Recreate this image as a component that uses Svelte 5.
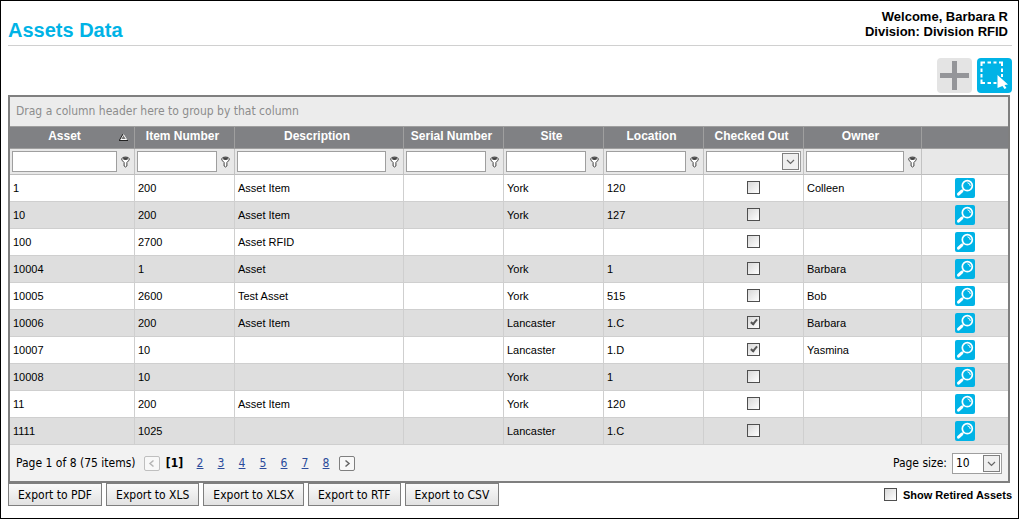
<script>
  const columns = [
    { name: "Asset", width: 125, sorted: true },
    { name: "Item Number", width: 100 },
    { name: "Description", width: 169 },
    { name: "Serial Number", width: 100 },
    { name: "Site", width: 100 },
    { name: "Location", width: 100 },
    { name: "Checked Out", width: 100, select: true },
    { name: "Owner", width: 118 }
  ];

  const assets = [
    { id: "1", item: "200", description: "Asset Item", site: "York", location: "120", out: false, owner: "Colleen" },
    { id: "10", item: "200", description: "Asset Item", site: "York", location: "127", out: false, owner: "" },
    { id: "100", item: "2700", description: "Asset RFID", site: "", location: "", out: false, owner: "" },
    { id: "10004", item: "1", description: "Asset", site: "York", location: "1", out: false, owner: "Barbara" },
    { id: "10005", item: "2600", description: "Test Asset", site: "York", location: "515", out: false, owner: "Bob" },
    { id: "10006", item: "200", description: "Asset Item", site: "Lancaster", location: "1.C", out: true, owner: "Barbara" },
    { id: "10007", item: "10", description: "", site: "Lancaster", location: "1.D", out: true, owner: "Yasmina" },
    { id: "10008", item: "10", description: "", site: "York", location: "1", out: false, owner: "" },
    { id: "11", item: "200", description: "Asset Item", site: "York", location: "120", out: false, owner: "" },
    { id: "1111", item: "1025", description: "", site: "Lancaster", location: "1.C", out: false, owner: "" }
  ];

  const pages = [2, 3, 4, 5, 6, 7, 8];
  const formats = ["PDF", "XLS", "XLSX", "RTF", "CSV"];

  let showRetired = false;
</script>

{#snippet dropArrow()}
  <svg class="dropArrow" viewBox="0 0 17 17" width="17" height="17">
    <rect x="0.5" y="0.5" width="16" height="16" fill="#efefef" stroke="#7f7f7f" />
    <path d="M5 7 L8.5 10.5 L12 7" fill="none" stroke="#666" stroke-width="1.2" />
  </svg>
{/snippet}

<div class="page">
  <header>
    <h1>Assets Data</h1>
    <div class="welcome">
      <div>Welcome, Barbara R</div>
      <div>Division: Division RFID</div>
    </div>
  </header>

  <div class="toolbar">
    <button class="tool add" aria-label="Add asset">
      <svg viewBox="0 0 35 35" width="35" height="35">
        <path d="M15 3h5v12h12v5H20v12h-5V20H3v-5h12z" fill="#949599" />
      </svg>
    </button>
    <button class="tool pick" aria-label="Select assets">
      <svg viewBox="0 0 35 35" width="35" height="35">
        <path d="M4.500 8V4.500H8M10.500 4.500h3.500M16.500 4.500h3M22 4.500h3V8M25 10.500v3.500M25 16v3M4.500 10.500v3.500M4.500 16v3.500M4.500 21.500V25H8M10.500 25h3.500M16.500 25h3" fill="none" stroke="#fff" stroke-width="2" />
        <path d="M20.500 17 L31 26.500 L27.500 27 L29.500 30 L27.500 31 L25.500 28 L20.500 30 Z" fill="#fff" />
      </svg>
    </button>
  </div>

  <div class="grid">
    <div class="groupPanel">Drag a column header here to group by that column</div>
    <table>
      <colgroup>
        {#each columns as column}
          <col style="width: {column.width}px" />
        {/each}
        <col class="viewCol" />
      </colgroup>
      <thead>
        <tr class="titles">
          {#each columns as column}
            <th scope="col">
              <div class="title">
                <span>{column.name}</span>
                {#if column.sorted}
                  <svg viewBox="0 0 9 8" width="9" height="8">
                    <path d="M4.500 1.500 L7.500 6.500 H1.500 Z" fill="#777" stroke="#fff" />
                    <path d="M0.500 7 L4 1" stroke="#222" />
                    <path d="M0 7.500 H9" stroke="#222" />
                  </svg>
                {/if}
              </div>
            </th>
          {/each}
          <td></td>
        </tr>
        <tr class="filters">
          {#each columns as column}
            <td>
              <div class="filter">
                {#if column.select}
                  <div class="dropDown">
                    <select aria-label="Filter {column.name}">
                      <option></option>
                      <option>Checked</option>
                      <option>Unchecked</option>
                    </select>
                    {@render dropArrow()}
                  </div>
                {:else}
                  <input type="text" aria-label="Filter {column.name}" />
                  <button class="funnel" aria-label="{column.name} filter options">
                    <svg viewBox="0 0 9 12" width="9" height="12">
                      <path d="M0.600 3 Q1 1 4.500 1 Q8 1 8.400 3 Q8 4.800 5.900 6.500 V10 Q4.500 12 3.100 10 V6.500 Q1 4.800 0.600 3 Z" fill="#fff" stroke="#444" />
                      <ellipse cx="4.500" cy="2.700" rx="2.500" ry="1.400" fill="#444" />
                    </svg>
                  </button>
                {/if}
              </div>
            </td>
          {/each}
          <td></td>
        </tr>
      </thead>
      <tbody>
        {#each assets as asset}
          <tr>
            <td>{asset.id}</td>
            <td>{asset.item}</td>
            <td>{asset.description}</td>
            <td></td>
            <td>{asset.site}</td>
            <td>{asset.location}</td>
            <td class="center">
              <input type="checkbox" checked={asset.out} aria-label="Asset {asset.id} checked out" />
            </td>
            <td>{asset.owner}</td>
            <td class="center">
              <button class="view" aria-label="View asset {asset.id}">
                <svg viewBox="0 0 20 20" width="20" height="20">
                  <circle cx="12.300" cy="7.700" r="5" fill="none" stroke="#fff" stroke-width="1.700" />
                  <path d="M12.500 4.800 Q15.200 5.200 15.300 8" fill="none" stroke="#fff" />
                  <path d="M9 11 L7.500 12.500" stroke="#fff" stroke-width="1.500" />
                  <path d="M6.800 13.200 L3.500 16.200" stroke="#fff" stroke-width="3" stroke-linecap="round" />
                </svg>
              </button>
            </td>
          </tr>
        {/each}
      </tbody>
    </table>

    <div class="pager">
      <span>Page 1 of 8 (75 items)</span>
      <nav aria-label="Pages">
        <button class="step" disabled aria-label="Previous page">
          <svg viewBox="0 0 14 13" width="14" height="13">
            <path d="M8.500 3.500 L5 6.500 L8.500 9.500" fill="none" stroke="currentColor" stroke-width="1.500" />
          </svg>
        </button>
        <b>[1]</b>
        {#each pages as page}
          <a href="#page{page}">{page}</a>
        {/each}
        <button class="step next" aria-label="Next page">
          <svg viewBox="0 0 14 13" width="14" height="13">
            <path d="M5.500 3.500 L9 6.500 L5.500 9.500" fill="none" stroke="currentColor" stroke-width="1.500" />
          </svg>
        </button>
      </nav>
      <label class="pageSize" for="pageSize">Page size:</label>
      <div class="dropDown size">
        <select id="pageSize">
          <option>10</option>
          <option>20</option>
          <option>50</option>
        </select>
        {@render dropArrow()}
      </div>
    </div>
  </div>

  <footer>
    <div class="exports">
      {#each formats as format}
        <button class="export">Export to {format}</button>
      {/each}
    </div>
    <label class="retired">
      <input type="checkbox" bind:checked={showRetired} />
      Show Retired Assets
    </label>
  </footer>
</div>

<style>
  .page {
    box-sizing: border-box;
    border: 1px solid #000;
    padding: 8px 6px 12px 7px;
    background: #fff;
    color: #000;
    font-family: "Liberation Sans", Arial, sans-serif;
    font-size: 11px;
  }

  header {
    display: flex;
    justify-content: space-between;
    height: 36px;
    border-bottom: 1px solid #d0d0d0;
  }

  h1 {
    margin: 9px 0 0;
    font-size: 20px;
    line-height: 24px;
    color: #00b3e6;
  }

  .welcome {
    padding-right: 4px;
    font-size: 13px;
    font-weight: bold;
    line-height: 15px;
    text-align: right;
  }

  button {
    padding: 0;
    border: 0;
    background: none;
    font: inherit;
    color: inherit;
  }

  svg {
    display: block;
  }

  .toolbar {
    display: flex;
    justify-content: flex-end;
    gap: 5px;
    padding: 12px 0 2px;
  }

  .tool {
    width: 35px;
    height: 35px;
    border-radius: 4px;
  }

  .add {
    background: #e4e4e4;
  }

  .pick,
  .view {
    background: #00b3e6;
  }

  .grid {
    margin-right: 2px;
    border: 2px solid #7f7f7f;
  }

  .groupPanel {
    padding: 0 6px;
    background: #ececec;
    color: #8c8c8c;
    line-height: 29px;
  }

  .groupPanel,
  .pager,
  .export {
    font-family: "DejaVu Sans Condensed", Tahoma, sans-serif;
    font-size: 12px;
  }

  table {
    width: 100%;
    table-layout: fixed;
    border-collapse: separate;
    border-spacing: 0;
  }

  .viewCol {
    width: 86px;
  }

  th,
  td {
    box-sizing: border-box;
    border-right: 1px solid #cfcfcf;
    border-bottom: 1px solid #cfcfcf;
  }

  tr > :last-child {
    border-right: 0;
  }

  .titles > * {
    height: 23px;
    padding: 0;
    border-top: 1px solid #9f9f9f;
    border-color: #9f9f9f;
    background: #808184;
    color: #fff;
    font-size: 12px;
  }

  .title {
    display: flex;
    align-items: center;
    padding: 0 4px 2px 0;
    line-height: 17px;
  }

  .title span {
    flex: 1;
    white-space: nowrap;
  }

  .title svg {
    margin-right: 2px;
  }

  .filters td {
    height: 26px;
    padding: 2px;
    border-right-color: #c2c2c2;
    border-bottom-color: #bdbdbd;
    background: #e8e8e8;
  }

  .filter {
    display: flex;
    align-items: center;
  }

  .filter input,
  select {
    box-sizing: border-box;
    min-width: 0;
    height: 21px;
    border: 1px solid #9f9f9f;
    border-radius: 0;
    background: #fff;
    font: inherit;
  }

  .filter input {
    flex: 1;
  }

  .funnel {
    padding: 0 2px 0 4px;
  }

  .dropDown {
    display: grid;
    flex: 1;
    align-items: center;
  }

  .dropDown > :global(*) {
    grid-area: 1 / 1;
  }

  select {
    appearance: none;
    width: 100%;
    padding: 0 3px;
  }

  .dropArrow {
    justify-self: end;
    margin-right: 2px;
    pointer-events: none;
  }

  tbody td {
    height: 27px;
    padding: 0 3px;
    line-height: 20px;
    white-space: nowrap;
  }

  tbody tr:nth-child(even) {
    background: #dedede;
  }

  .center > * {
    display: block;
    margin: 0 auto;
  }

  .center > input {
    margin-bottom: 1px;
  }

  input[type="checkbox"] {
    appearance: none;
    box-sizing: border-box;
    width: 13px;
    height: 13px;
    border: 1px solid #4f4f4f;
    background: linear-gradient(135deg, #d8d8d8, #fff);
  }

  input[type="checkbox"]:checked::before {
    content: "";
    display: block;
    width: 2px;
    height: 5px;
    margin: 1px 0 0 4px;
    border: solid #555;
    border-width: 0 2px 2px 0;
    transform: rotate(40deg);
  }

  .view {
    width: 20px;
    height: 20px;
    border-radius: 2px;
  }

  .pager {
    display: flex;
    align-items: center;
    height: 36px;
    padding: 0 6px;
    background: #f2f2f2;
  }

  nav {
    display: flex;
    align-items: center;
    margin-left: 8px;
  }

  nav b {
    width: 30px;
    text-align: center;
  }

  nav a {
    width: 21px;
    color: #2b4b9b;
    text-align: center;
  }

  .step {
    border: 1px solid #7f7f7f;
    border-radius: 2px;
    background: #f8f8f8;
    color: #666;
  }

  .next {
    margin-left: 2px;
  }

  .step:disabled {
    border-color: #bfbfbf;
    color: #b5b5b5;
  }

  .pageSize {
    margin-left: auto;
    margin-right: 5px;
  }

  .size {
    flex: 0 0 50px;
  }

  footer {
    display: flex;
    justify-content: space-between;
    align-items: center;
  }

  .exports {
    display: flex;
    gap: 4px;
  }

  .export {
    height: 23px;
    padding: 0 9px;
    border: 1px solid #7f7f7f;
    background: linear-gradient(#fafafa, #e2e2e2);
  }

  .retired {
    display: flex;
    align-items: center;
    gap: 6px;
    font-weight: bold;
  }

  .retired input {
    margin: 0;
  }

  :global(body) {
    margin: 0;
  }
</style>
